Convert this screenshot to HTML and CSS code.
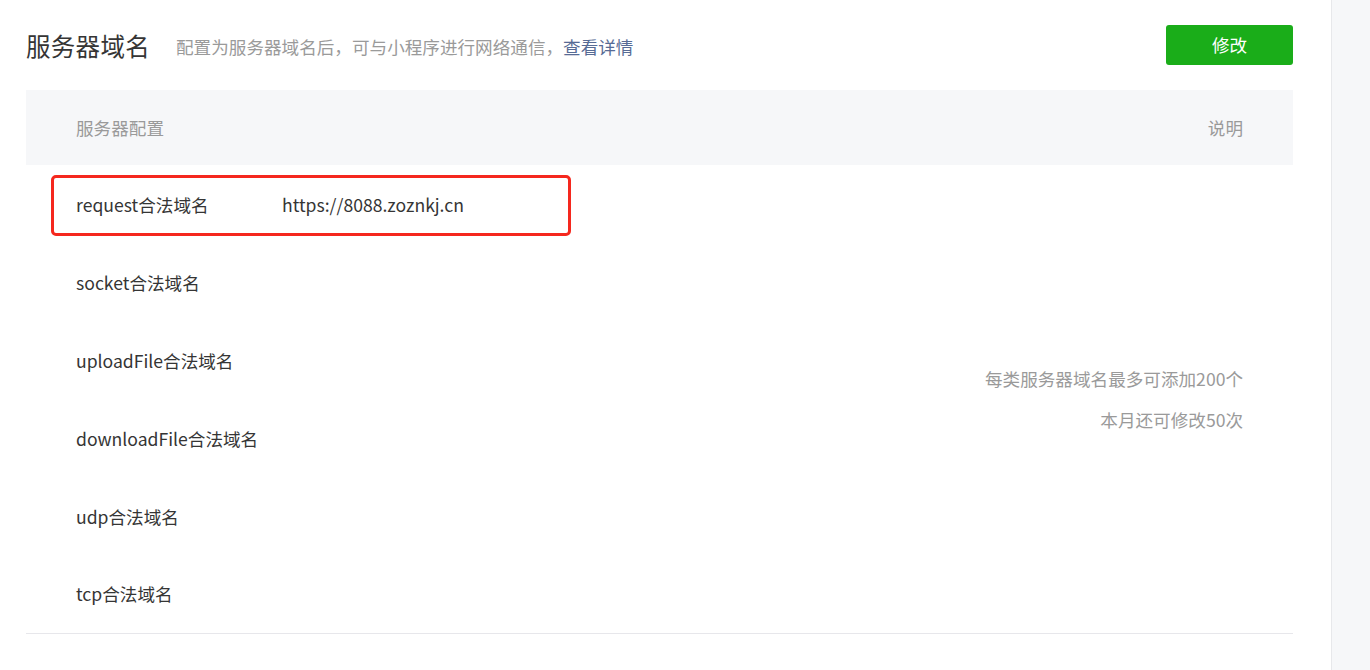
FILE: index.html
```html
<!DOCTYPE html>
<html lang="zh-CN">
<head>
    <meta charset="UTF-8">
    <title>服务器域名</title>
    <link rel="stylesheet" href="styles.css">
</head>
<body>
<div class="page">
    <div class="main">
        <!--标题栏:标题+说明+修改按钮-->
        <div class="head">
            <h2 class="title">服务器域名</h2>
            <p class="desc">配置为服务器域名后，可与小程序进行网络通信，<a href="#">查看详情</a></p>
            <a class="btn" href="#">修改</a>
        </div>

        <div class="tableWrap">
            <table class="table">
                <colgroup>
                    <col class="colName">
                    <col>
                    <col class="colNote">
                </colgroup>
                <thead>
                <tr>
                    <th class="thName">服务器配置</th>
                    <th></th>
                    <th class="thNote">说明</th>
                </tr>
                </thead>
                <tbody>
                <tr>
                    <td class="name">request合法域名</td>
                    <td class="value">https://8088.zoznkj.cn</td>
                    <td class="note" rowspan="6">
                        <p>每类服务器域名最多可添加200个</p>
                        <p>本月还可修改50次</p>
                    </td>
                </tr>
                <tr>
                    <td class="name">socket合法域名</td>
                    <td class="value"></td>
                </tr>
                <tr>
                    <td class="name">uploadFile合法域名</td>
                    <td class="value"></td>
                </tr>
                <tr>
                    <td class="name">downloadFile合法域名</td>
                    <td class="value"></td>
                </tr>
                <tr>
                    <td class="name">udp合法域名</td>
                    <td class="value"></td>
                </tr>
                <tr>
                    <td class="name">tcp合法域名</td>
                    <td class="value"></td>
                </tr>
                </tbody>
            </table>
            <!--红框标注,盖在第一行上面-->
            <div class="mark"></div>
        </div>
    </div>
    <div class="side"></div>
</div>
</body>
</html>
```

FILE: styles.css
```css
* {
    margin: 0;
    padding: 0;
    box-sizing: border-box;
}
html, body {
    height: 100%;
}
body {
    font-family: "Noto Sans CJK SC", "Noto Sans", sans-serif;
    color: #353535;
    background: #fff;
    overflow: hidden;
}
a {
    text-decoration: none;
}
.page {
    display: flex;
    height: 100%;
}
.main {
    flex: 1;
    padding: 25px 38px 0 26px;
}
.side {
    width: 39px;
    background: #f6f7f9;
    border-left: 1px solid #e7e8eb;
}

/*标题栏*/
.head {
    display: flex;
    align-items: center;
    height: 40px;
}
.title {
    font-size: 24.5px;
    font-weight: normal;
    color: #353535;
    letter-spacing: 0.3px;
}
.desc {
    flex: 1;
    margin-left: 26px;
    padding-top: 3px;
    font-size: 17.6px;
    color: #9a9a9a;
}
.desc a {
    color: #576b95;
}
.btn {
    width: 127px;
    height: 40px;
    line-height: 40px;
    text-align: center;
    font-size: 17.6px;
    color: #fff;
    background: #1aad19;
    border-radius: 3px;
}

/*表格*/
.tableWrap {
    position: relative;
    margin-top: 25px;
}
.table {
    width: 100%;
    border-collapse: collapse;
    table-layout: fixed;
}
.colName {
    width: 256px;
}
.colNote {
    width: 400px;
}
.table th {
    height: 75px;
    font-size: 17.6px;
    font-weight: normal;
    color: #9a9a9a;
    background: #f6f7f9;
    text-align: left;
}
.table .thName {
    padding-left: 50px;
}
.table .thNote {
    text-align: right;
    padding-right: 50px;
}
.table td {
    height: 78px;
    font-size: 17.6px;
    vertical-align: middle;
    white-space: nowrap;
}
.table .name {
    padding-left: 50px;
}
.table tbody {
    border-bottom: 1px solid #e7e7eb;
}
.table .note {
    text-align: right;
    padding-right: 50px;
    color: #9a9a9a;
    line-height: 41px;
}
.mark {
    position: absolute;
    left: 25px;
    top: 85px;
    width: 520px;
    height: 61px;
    border: 3px solid #f5281e;
    border-radius: 5px;
}
```
